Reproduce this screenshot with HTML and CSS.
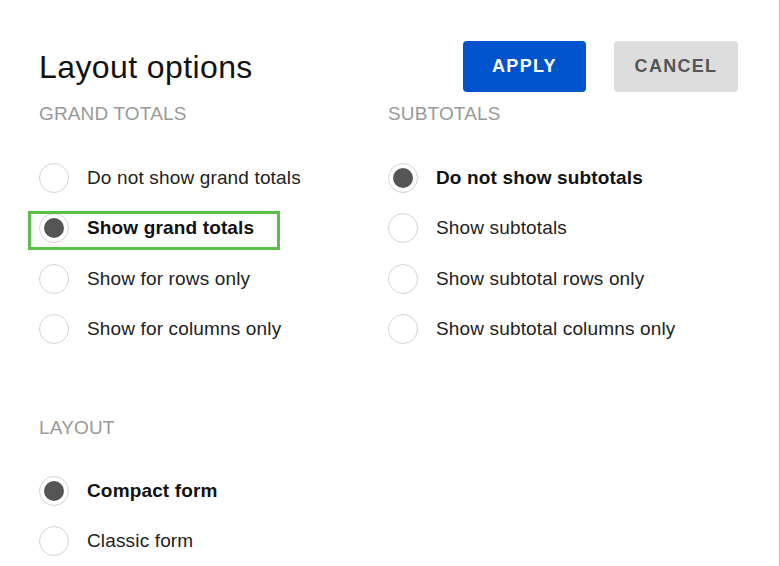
FILE: index.html
```html
<!DOCTYPE html>
<html lang="en">
<head>
<meta charset="utf-8">
<title>Layout options</title>
<link rel="stylesheet" href="styles.css">
</head>
<body>
<div class="dialog">
  <header class="header">
    <h1 class="title">Layout options</h1>
    <div class="actions">
      <button class="btn btn-apply">APPLY</button>
      <button class="btn btn-cancel">CANCEL</button>
    </div>
  </header>

  <div class="columns">
    <section class="group">
      <h2 class="group-title">GRAND TOTALS</h2>
      <ul class="options">
        <li class="option"><span class="radio"></span><span class="label">Do not show grand totals</span></li>
        <li class="option selected highlighted"><span class="radio"></span><span class="label">Show grand totals</span><span class="highlight"></span></li>
        <li class="option"><span class="radio"></span><span class="label">Show for rows only</span></li>
        <li class="option"><span class="radio"></span><span class="label">Show for columns only</span></li>
      </ul>
    </section>
    <section class="group">
      <h2 class="group-title">SUBTOTALS</h2>
      <ul class="options">
        <li class="option selected"><span class="radio"></span><span class="label">Do not show subtotals</span></li>
        <li class="option"><span class="radio"></span><span class="label">Show subtotals</span></li>
        <li class="option"><span class="radio"></span><span class="label">Show subtotal rows only</span></li>
        <li class="option"><span class="radio"></span><span class="label">Show subtotal columns only</span></li>
      </ul>
    </section>
  </div>

  <section class="group layout-group">
    <h2 class="group-title">LAYOUT</h2>
    <ul class="options">
      <li class="option selected"><span class="radio"></span><span class="label">Compact form</span></li>
      <li class="option"><span class="radio"></span><span class="label">Classic form</span></li>
    </ul>
  </section>
</div>
</body>
</html>
```

FILE: styles.css
```css
* { box-sizing: border-box; }
html, body {
  margin: 0;
  padding: 0;
  background: #ffffff;
}
body {
  font-family: "Liberation Sans", Arial, sans-serif;
  color: #222;
  width: 780px;
  height: 566px;
  overflow: hidden;
}
.dialog {
  width: 780px;
  height: 566px;
  border-right: 1px solid #c4c4c4;
  padding: 41px 41px 0 39px;
}
.header {
  display: flex;
  align-items: flex-start;
  justify-content: space-between;
}
.title {
  margin: 8px 0 0 0;
  font-size: 32px;
  line-height: 36px;
  letter-spacing: 0.4px;
  font-weight: normal;
  color: #111;
}
.actions {
  display: flex;
  gap: 28px;
}
.btn {
  font-family: "Liberation Sans", Arial, sans-serif;
  font-weight: bold;
  font-size: 18px;
  letter-spacing: 1.3px;
  height: 51px;
  width: 123px;
  border: none;
  border-radius: 4px;
  padding: 0;
  cursor: pointer;
}
.btn-apply {
  background: #0053cc;
  color: #ffffff;
}
.btn-cancel {
  width: 124px;
  background: #dddddd;
  color: #555555;
}
.columns {
  display: grid;
  grid-template-columns: 349px 1fr;
  margin-top: 11px;
}
.group-title {
  margin: 0;
  font-size: 19px;
  line-height: 22px;
  letter-spacing: 0.15px;
  font-weight: normal;
  color: #999999;
}
.options {
  list-style: none;
  margin: 28px 0 0 0;
  padding: 0;
}
.option {
  position: relative;
  display: flex;
  align-items: center;
  height: 50px;
  gap: 18px;
  font-size: 19px;
  letter-spacing: 0.15px;
  color: #222;
}
.option:nth-child(3) {
  height: 51px;
}
.radio {
  width: 30px;
  height: 30px;
  border-radius: 50%;
  border: 1px solid #d4d4d4;
  display: flex;
  align-items: center;
  justify-content: center;
  flex: none;
}
.option.selected .radio::after {
  content: "";
  width: 20px;
  height: 20px;
  border-radius: 50%;
  background: #555555;
}
.option.selected .label {
  font-weight: bold;
  color: #111;
}
.highlight {
  position: absolute;
  left: -11px;
  top: 8px;
  width: 252px;
  height: 39px;
  border: 3px solid #5cbf47;
  pointer-events: none;
}
.layout-group {
  margin-top: 63px;
}
.layout-group .options {
  margin-top: 27px;
}
```
